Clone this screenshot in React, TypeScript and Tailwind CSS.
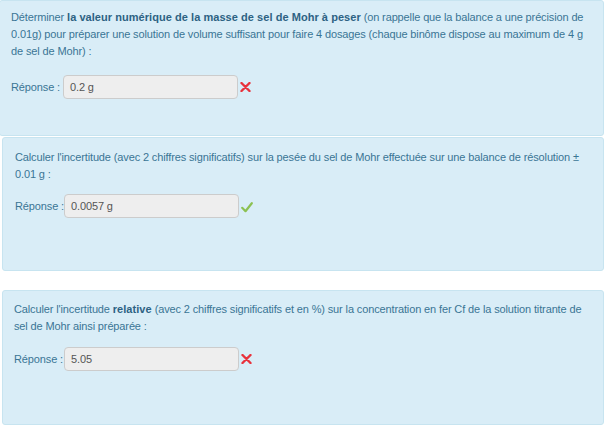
import React from "react";

const font = { fontFamily: '"Liberation Sans", Arial, Helvetica, sans-serif' };

function Cross() {
  return (
    <svg width="11" height="10" viewBox="0 0 11 10" className="ml-[2px]">
      <path d="M1.5 1 L9.5 9 M9.5 1 L1.5 9" stroke="#e8323c" strokeWidth="2.4" strokeLinecap="round" fill="none" />
    </svg>
  );
}

function Check() {
  return (
    <svg width="12" height="11" viewBox="0 0 12 11" className="ml-[2px] mt-[3px]">
      <path d="M1.2 5.8 L4.5 9.2 L10.8 1.2" stroke="#8cc152" strokeWidth="2.2" strokeLinecap="round" strokeLinejoin="round" fill="none" />
    </svg>
  );
}

function Answer({ value, ok, mt, lw }: { value: string; ok: boolean; mt: string; lw: string }) {
  return (
    <div className={`flex items-center ${mt}`}>
      <span className={`${lw} shrink-0 whitespace-nowrap`}>Réponse :</span>
      <div className="w-[175px] h-[24px] border border-[#cccccc] bg-[#eeeeee] rounded-[4px] flex items-center pl-[6px] text-[#555555]">
        {value}
      </div>
      {ok ? <Check /> : <Cross />}
    </div>
  );
}

export default function App() {
  return (
    <div className="w-[606px] h-[428px] bg-white overflow-hidden text-[11px] leading-[16.5px] text-[#3a7595] tracking-[-0.13px]" style={font}>
      <div className="ml-[-1px] w-[605px] h-[136px] bg-[#d9edf7] border border-[#c7e4f0] rounded-[3px] pl-[11px] pt-[8px]">
        <p className="whitespace-nowrap leading-[17px]">
          Déterminer <b className="text-[#2d6283] tracking-[0.05px]">la valeur numérique de la masse de sel de Mohr à peser</b> (on rappelle que la balance a une précision de
          <br />
          0.01g) pour préparer une solution de volume suffisant pour faire 4 dosages (chaque binôme dispose au maximum de 4 g
          <br />
          de sel de Mohr) :
        </p>
        <Answer value="0.2 g" ok={false} mt="mt-[15px]" lw="w-[52px]" />
      </div>
      <div className="ml-[2px] mt-[1px] w-[602px] h-[134px] bg-[#d9edf7] border border-[#c7e4f0] rounded-[3px] pl-[12px] pt-[11px]">
        <p className="whitespace-nowrap">
          Calculer l'incertitude (avec 2 chiffres significatifs) sur la pesée du sel de Mohr effectuée sur une balance de résolution ±
          <br />
          0.01 g :
        </p>
        <Answer value="0.0057 g" ok={true} mt="mt-[12px]" lw="w-[49px]" />
      </div>
      <div className="ml-[2px] mt-[19px] w-[602px] h-[135px] bg-[#d9edf7] border border-[#c7e4f0] rounded-[3px] pl-[11px] pt-[10px]">
        <p className="whitespace-nowrap">
          Calculer l'incertitude <b className="text-[#2d6283] tracking-[0.05px]">relative</b> (avec 2 chiffres significatifs et en %) sur la concentration en fer Cf de la solution titrante de
          <br />
          sel de Mohr ainsi préparée :
        </p>
        <Answer value="5.05" ok={false} mt="mt-[13px]" lw="w-[50px]" />
      </div>
    </div>
  );
}
